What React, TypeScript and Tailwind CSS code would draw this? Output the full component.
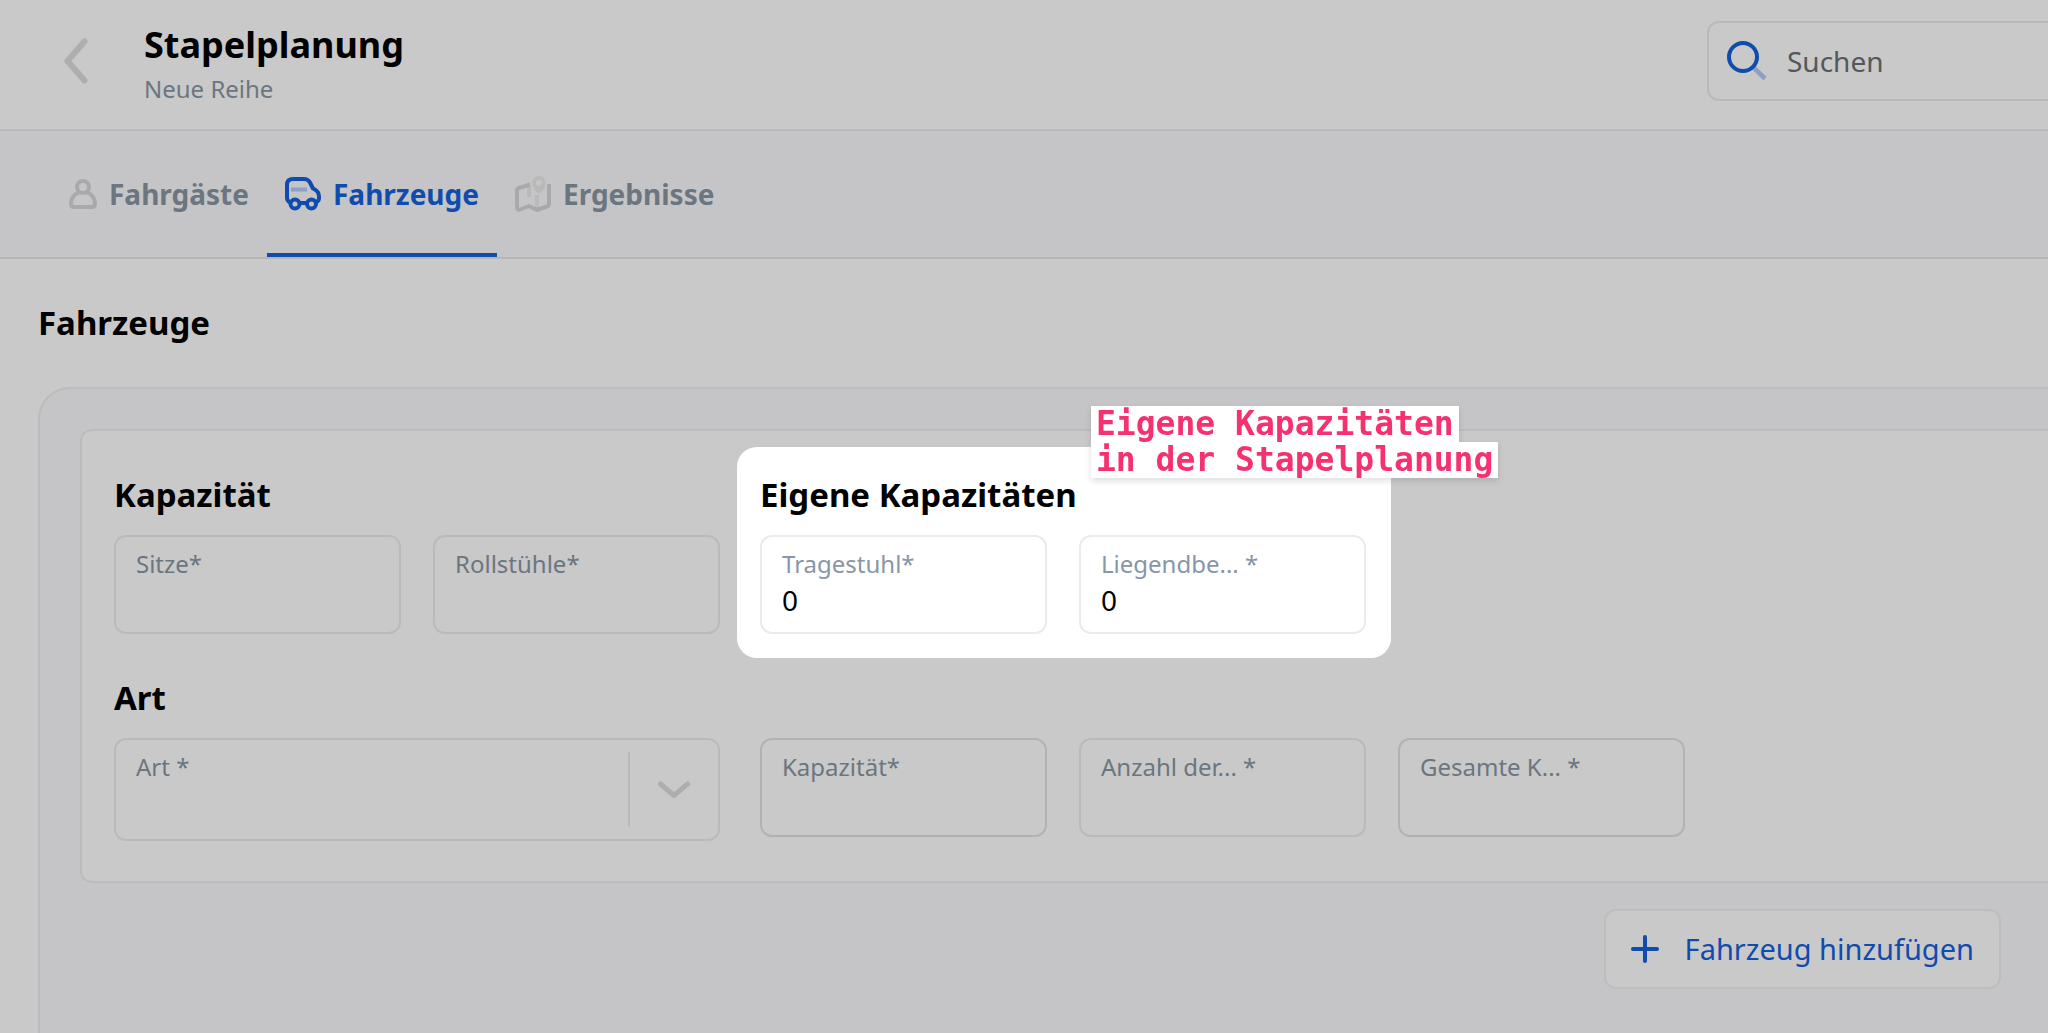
import { useState } from "react";
import type { ReactNode } from "react";

function BackIcon() {
  return (
    <svg className="h-[46px] w-6" viewBox="0 0 24 46" fill="none">
      <path d="M20.500 3.500 L3.500 23 L20.500 42.500" stroke="#aeaeae" strokeWidth="6" strokeLinecap="round" strokeLinejoin="round" />
    </svg>
  );
}

function SearchIcon() {
  return (
    <svg className="size-10 shrink-0" viewBox="0 0 40 40" fill="none">
      <path d="M27 27 L38 37.500" stroke="#8d9fc4" strokeWidth="4.500" />
      <circle cx="16" cy="16" r="14" stroke="#104bae" strokeWidth="4" />
    </svg>
  );
}

function PersonIcon() {
  return (
    <svg className="h-[30px] w-7" viewBox="0 0 28 30" fill="none" stroke="#a9a9aa" strokeWidth="4">
      <circle cx="14" cy="8" r="6" />
      <path d="M9.500 13.500 C5 15.500 2 20 2 25 Q2 28 5 28 H23 Q26 28 26 25 C26 20 23 15.500 18.500 13.500" strokeLinejoin="round" />
    </svg>
  );
}

function CarIcon() {
  return (
    <svg className="h-[34px] w-9" viewBox="0 0 36 34" fill="none" stroke="#104bae" strokeWidth="4">
      <path d="M5 25.500 Q2 24 2 20.500 V8 Q2 2 8 2 H19 Q23 2 25 5.500 L28 11.500 Q34 14 34 19.500 V21 Q34 24 31 25.500" strokeLinejoin="round" />
      <path d="M15 26 H22" />
      <circle cx="10" cy="27" r="4.500" />
      <circle cx="26.500" cy="27" r="4.500" />
      <path d="M6 12.500 H22" stroke="#8d9fc4" />
    </svg>
  );
}

function MapIcon() {
  return (
    <svg className="h-[38px] w-9" viewBox="0 0 36 38" fill="none">
      <path d="M14 11 V22 M22 20 V34" stroke="#b9b9ba" strokeWidth="4" />
      <path d="M15 9.500 L4 13 Q2 13.500 2 16 V32 Q2 35.500 5 34.500 L14 31 L22 35 L32 31.500 Q34 31 34 28 V9" stroke="#a9a9aa" strokeWidth="4" strokeLinejoin="round" />
      <path d="M24 1 C28 1 30.500 4 30.500 8 C30.500 12 27 18 24 18 C21 18 17.500 12 17.500 8 C17.500 4 20 1 24 1 Z" fill="#b9b9ba" />
      <circle cx="24" cy="8" r="3" fill="#c5c5c7" />
    </svg>
  );
}

function PlusIcon() {
  return (
    <svg className="size-7" viewBox="0 0 28 28" fill="none">
      <path d="M14 2 V26 M2 14 H26" stroke="#104bae" strokeWidth="4" strokeLinecap="round" />
    </svg>
  );
}

interface TabProps {
  icon: ReactNode;
  label: string;
  active: boolean;
  onClick: () => void;
}

function Tab({ icon, label, active, onClick }: TabProps) {
  return (
    <button
      type="button"
      role="tab"
      aria-selected={active}
      onClick={onClick}
      className={
        active
          ? "flex items-center gap-3 border-b-4 border-[#104bae] px-[18px] pt-1 text-[28px] font-bold text-[#104bae]"
          : "flex items-center gap-3 border-b-4 border-transparent px-[18px] pt-1 text-[28px] font-bold text-[#6b7680]"
      }
    >
      {icon}
      {label}
    </button>
  );
}

interface FieldProps {
  id: string;
  label: string;
  value?: string;
  tone?: "light" | "normal" | "strong";
}

const tones = {
  light: "border-[#ebebeb] text-[#8796a8]",
  normal: "border-[#bababb] text-[#6b7680]",
  strong: "border-[#b2b2b2] text-[#6b7680]",
};

function Field({ id, label, value = "", tone = "normal" }: FieldProps) {
  return (
    <div className={`flex h-[99px] w-[287px] flex-col rounded-xl border-2 px-5 pt-[11px] ${tones[tone]}`}>
      <label htmlFor={id} className="text-[24px] leading-8 whitespace-nowrap">
        {label}
      </label>
      <input id={id} defaultValue={value} className="h-10 w-full bg-transparent text-[28px] leading-10 text-black outline-none" />
    </div>
  );
}

function App() {
  const [tab, setTab] = useState("Fahrzeuge");

  return (
    <div className="flex min-h-screen flex-col overflow-x-hidden bg-[#c9c9c9] font-['Noto_Sans',sans-serif] text-black">
      <header className="flex h-[131px] items-start justify-between border-b-2 border-[#b9b9ba]">
        <div className="flex items-start">
          <button type="button" aria-label="Zurück" className="mt-[38px] ml-16">
            <BackIcon />
          </button>
          <div className="mt-[19px] ml-14">
            <h1 className="text-[36px] leading-[52px] font-bold">Stapelplanung</h1>
            <p className="text-[24px] leading-9 text-[#6b7680]">Neue Reihe</p>
          </div>
        </div>
        <div className="mt-[21px] flex h-20 w-[341px] items-center gap-5 rounded-l-xl border-2 border-r-0 border-[#b9b9ba] pl-[18px]">
          <SearchIcon />
          <input
            type="search"
            aria-label="Suchen"
            placeholder="Suchen"
            className="w-full min-w-0 bg-transparent text-[28px] outline-none placeholder:text-[#54585c]"
          />
        </div>
      </header>

      <nav role="tablist" className="flex h-32 border-b-2 border-[#b5b5b6] bg-[#c5c5c7] pl-[51px]">
        <Tab icon={<PersonIcon />} label="Fahrgäste" active={tab === "Fahrgäste"} onClick={() => setTab("Fahrgäste")} />
        <Tab icon={<CarIcon />} label="Fahrzeuge" active={tab === "Fahrzeuge"} onClick={() => setTab("Fahrzeuge")} />
        <Tab icon={<MapIcon />} label="Ergebnisse" active={tab === "Ergebnisse"} onClick={() => setTab("Ergebnisse")} />
      </nav>

      <main className="flex flex-1 flex-col pt-11 pl-[38px]">
        <h2 className="text-[33px] leading-10 font-bold">Fahrzeuge</h2>

        <div className="mt-11 flex-1 rounded-tl-[32px] border-t-2 border-l-2 border-[#bcbcbd] bg-[#c5c5c7] pt-10 pl-10">
          <section className="rounded-l-xl border-2 border-r-0 border-[#bcbcbd] bg-[#c9c9c9] pt-4 pb-10 pl-8">
            <div className="flex gap-[17px]">
              <div className="pt-7">
                <h3 className="mb-5 text-[33px] leading-10 font-bold">Kapazität</h3>
                <div className="flex gap-8">
                  <Field id="sitze" label="Sitze*" />
                  <Field id="rollstuehle" label="Rollstühle*" />
                </div>
              </div>
              <div className="relative rounded-[20px] bg-white pt-7 pr-[25px] pb-6 pl-[23px]">
                <h3 className="mb-5 text-[33px] leading-10 font-bold">Eigene Kapazitäten</h3>
                <div className="flex gap-8">
                  <Field id="tragestuhl" label="Tragestuhl*" value="0" tone="light" />
                  <Field id="liegend" label="Liegendbe... *" value="0" tone="light" />
                </div>
                <p className="absolute -top-[41px] left-[354px] flex flex-col items-start font-['DejaVu_Sans_Mono',monospace] text-[33px] leading-9 font-bold whitespace-nowrap text-[#f5316f] drop-shadow-md">
                  <span className="bg-white px-[5px]">Eigene Kapazitäten</span>
                  <span className="bg-white px-[5px]">in der Stapelplanung</span>
                </p>
              </div>
            </div>

            <h3 className="mt-5 mb-5 text-[33px] leading-10 font-bold">Art</h3>
            <div className="flex items-start">
              <div className="grid h-[103px] w-[606px] rounded-xl border-2 border-[#bababb]">
                <label htmlFor="art" className="col-start-1 row-start-1 px-5 pt-[11px] text-[24px] leading-8 text-[#6b7680]">
                  Art *
                </label>
                <select id="art" className="col-start-1 row-start-1 w-full appearance-none bg-transparent outline-none">
                  <option value=""></option>
                </select>
                <span className="pointer-events-none col-start-1 row-start-1 my-3 flex w-[90px] items-center justify-center justify-self-end border-l-2 border-[#b9b9ba]">
                  <svg className="h-[18px] w-8" viewBox="0 0 32 18" fill="none">
                    <path d="M2.500 3 L16 14.500 L29.500 3" stroke="#aeaeae" strokeWidth="5" strokeLinecap="round" strokeLinejoin="round" />
                  </svg>
                </span>
              </div>
              <div className="ml-10 flex gap-8">
                <Field id="kapazitaet" label="Kapazität*" tone="strong" />
                <Field id="anzahl" label="Anzahl der... *" />
                <Field id="gesamt" label="Gesamte K... *" tone="strong" />
              </div>
            </div>
          </section>

          <div className="mt-[26px] flex justify-end pr-[47px]">
            <button
              type="button"
              className="flex h-20 items-center gap-[26px] rounded-xl border-2 border-[#bdbdbe] bg-[#c9c9c9] px-[25px] text-[29px] text-[#104bae]"
            >
              <PlusIcon />
              Fahrzeug hinzufügen
            </button>
          </div>
        </div>
      </main>
    </div>
  );
}

export default App;
